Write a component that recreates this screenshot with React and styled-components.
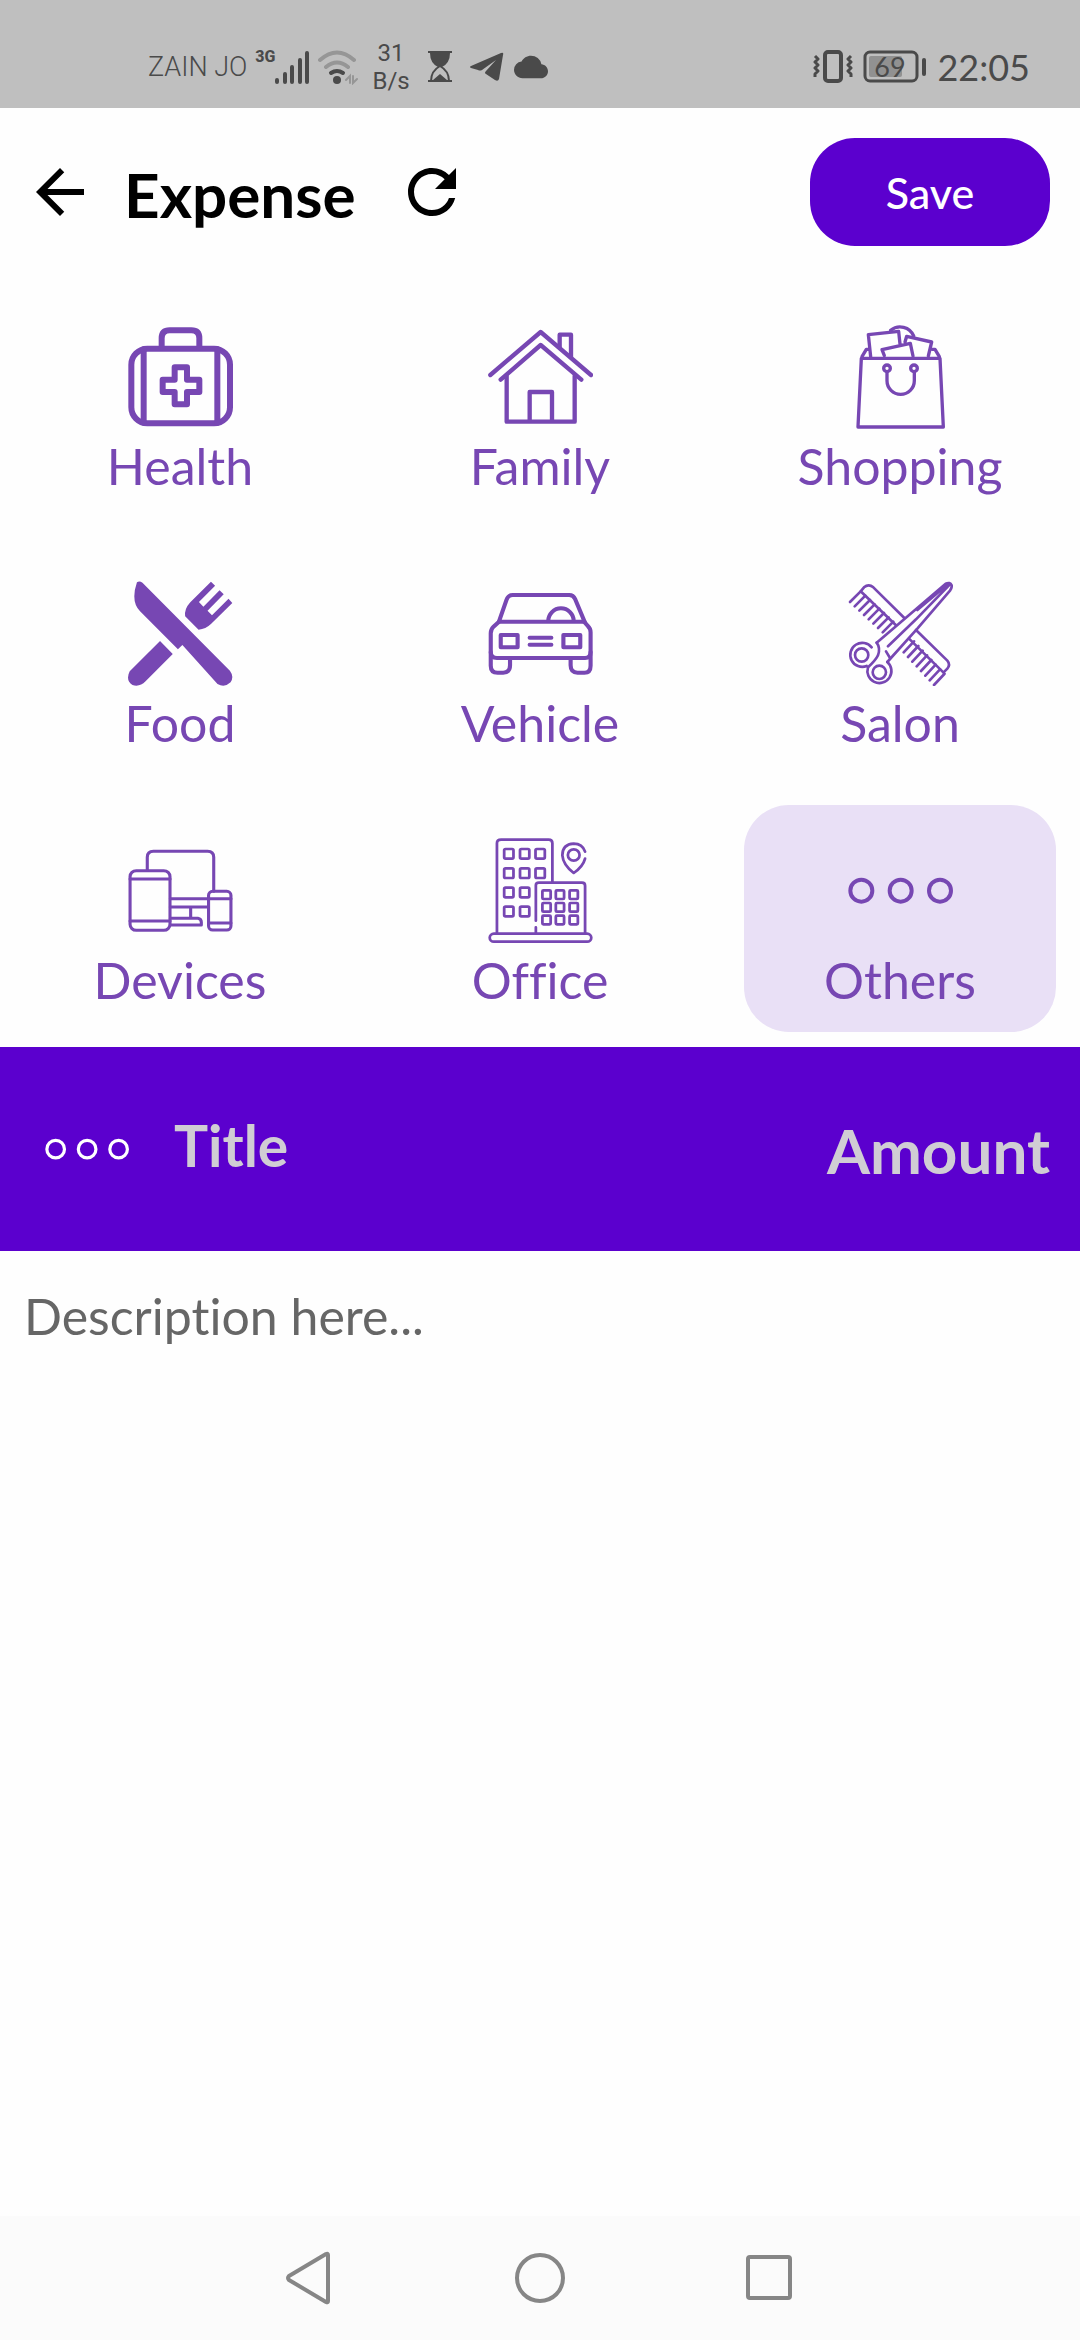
import { useState } from "react";
import styled, { createGlobalStyle } from "styled-components";
import { MdArrowBack, MdRefresh, MdCloud } from "react-icons/md";

const GlobalStyle = createGlobalStyle`
  * {
    box-sizing: border-box;
  }

  body {
    margin: 0;
    background-color: #fefefe;
    font-family: "Lato", "Noto Sans", sans-serif;
    font-variant-ligatures: none;
  }

  button, input, textarea {
    font-family: inherit;
    font-variant-ligatures: inherit;
    margin: 0;
    padding: 0;
    border: none;
    background: none;
    outline: none;
  }

  button {
    cursor: pointer;
  }
`;

const Page = styled.div`
  min-height: 100vh;
  display: flex;
  flex-direction: column;
`;

const StatusBar = styled.div`
  height: 108px;
  padding: 26px 50px 0 148px;
  background-color: #bfbfbf;
  color: #4a4a4a;
  display: flex;
  align-items: center;
  justify-content: space-between;
`;

const StatusGroup = styled.div`
  display: flex;
  align-items: center;
  gap: ${({ $gap }) => $gap}px;

  svg {
    display: block;
    flex: none;
  }
`;

const Carrier = styled.span`
  font-family: "Roboto", sans-serif;
  font-size: 27px;
  font-weight: 300;
`;

const Speed = styled.span`
  font-family: "Roboto", sans-serif;
  font-size: 24px;
  line-height: 28px;
  text-align: center;
  margin: 0 10px 0 6px;
`;

const Clock = styled.span`
  font-size: 36px;
`;

const Header = styled.header`
  height: 168px;
  padding: 0 30px 0 24px;
  display: flex;
  align-items: center;
`;

const IconButton = styled.button`
  display: flex;
  font-size: 72px;
  color: #000;
`;

const Heading = styled.h1`
  margin: 4px 40px 0 28px;
  font-size: 62px;
  font-weight: 700;
  line-height: 72px;
  color: #000;
`;

const SaveButton = styled.button`
  width: 240px;
  height: 108px;
  margin-left: auto;
  border-radius: 45px;
  background-color: #5b00ce;
  color: #fff;
  font-size: 43px;
  font-weight: 500;
`;

const CategoryGrid = styled.div`
  display: grid;
  grid-template-columns: repeat(3, 1fr);
  gap: 30px 48px;
  padding: 15px 24px;
`;

const CategoryTile = styled.button`
  height: 227px;
  padding-top: 33px;
  border-radius: 45px;
  display: flex;
  flex-direction: column;
  align-items: center;
  justify-content: flex-start;
  color: #7747b3;
  background-color: ${({ $active }) => ($active ? "#e9e0f6" : "transparent")};

  svg {
    display: block;
    width: 105px;
    height: 105px;
    flex: none;
  }
`;

const CategoryName = styled.span`
  margin-top: 7px;
  font-size: 50px;
  line-height: 60px;
`;

const EntryBar = styled.div`
  height: 204px;
  padding: 0 30px 0 45px;
  display: flex;
  align-items: center;
  gap: 45px;
  background-color: #5b00ce;
  color: #fff;

  svg {
    width: 84px;
    height: 84px;
    flex: none;
  }
`;

const EntryInput = styled.input`
  min-width: 0;
  flex: 1;
  height: 80px;
  padding-top: 2px;
  font-size: 62px;
  font-weight: 700;
  text-align: right;
  color: #fff;

  &::placeholder {
    color: #d0cdd4;
    opacity: 1;
  }
`;

const TitleInput = styled(EntryInput)`
  padding: 0 0 8px;
  font-size: 57px;
  text-align: left;
`;

const Description = styled.textarea`
  flex: 1;
  padding: 35px 24px;
  font-size: 50px;
  line-height: 60px;
  color: #222;
  resize: none;

  &::placeholder {
    color: #666;
    opacity: 1;
  }
`;

const NavBar = styled.nav`
  height: 124px;
  background-color: #fbfbfb;
  display: flex;
  align-items: center;
  justify-content: center;
  gap: 170px;

  button {
    display: flex;
  }
`;

const Drawing = ({ box, width, children, fill = "none" }) => (
  <svg
    viewBox={box}
    preserveAspectRatio="none"
    fill={fill}
    stroke={width ? "currentColor" : "none"}
    strokeWidth={width}
    strokeLinecap="round"
    strokeLinejoin="round"
    aria-hidden="true"
  >
    {children}
  </svg>
);

const HealthIcon = () => (
  <Drawing box="112 70 315 315" width={18}>
    <rect x="122" y="144" width="296" height="224" rx="48" />
    <path d="M159 146V366M380 146V366M213 140V113Q213 89 237 89H302Q326 89 326 113V140" />
    <path d="M252 200H289V237H326V274H289V311H252V274H216V237H252Z" />
  </Drawing>
);

const FamilyIcon = () => (
  <Drawing box="112 70 315 315" width={13}>
    <path d="M119 223L270 94L421 223M150 237L270 133L392 237" />
    <path d="M168 226V363H372V226M237 357V274H304V357M327 140V102H361V168" />
  </Drawing>
);

const ShoppingIcon = () => (
  <Drawing box="202 70 315 315" width={10}>
    <path d="M242 173H478L488 379H232Z" />
    <path d="M244 168L257 146H266M476 168L463 146H454" />
    <path d="M270 168L263 102L354 92L358 130M311 165L304 147L389 128L397 166M373 124L378 107L453 124L443 166" />
    <path d="M330 89A44 44 0 0 1 399 106M319 215V240A41 41 0 0 0 401 240V215" />
    <circle cx="319" cy="203" r="10" />
    <circle cx="400" cy="203" r="10" />
  </Drawing>
);

const FoodIcon = () => (
  <Drawing box="109 61 305 315" fill="currentColor">
    <path d="M135 65Q142 60 151 66L405 330Q418 348 407 365Q390 382 369 370L267 253L254 266L144 152Q116 122 135 65Z" />
    <path d="M350 63L362 75L315 124L328 138L375 89L387 101L340 150L353 164L401 114L412 127L350 190Q335 205 314 207L275 167Q272 145 290 125Z" />
    <path d="M202 241L239 280L160 362Q143 380 122 373Q101 358 114 332Z" />
  </Drawing>
);

const VehicleIcon = () => (
  <Drawing box="1154 61 305 315" width={12}>
    <path d="M1186 182L1208 117Q1213 103 1226 103H1390Q1402 103 1407 115L1435 184M1186 183H1435" />
    <path d="M1186 183L1170 198Q1162 206 1162 218V274Q1162 292 1180 292H1436Q1452 292 1452 274V215Q1452 204 1444 196L1433 183" />
    <path d="M1162 274V315Q1162 336 1182 336H1198Q1218 336 1218 314V294M1452 274V315Q1452 336 1434 336H1414Q1394 336 1394 314V294" />
    <path d="M1275 231H1338M1275 252H1338M1329 181A37 38 0 0 1 1403 181" />
    <rect x="1191" y="223" width="49" height="37" />
    <rect x="1373" y="223" width="49" height="37" />
  </Drawing>
);

const upperTeeth = [0, 1, 2, 3, 4, 5, 6, 7].map((i) => `M${240 + i * 14} ${92 + i * 13}l-32 32`);
const lowerTeeth = [0, 1, 2, 3, 4, 5, 6, 7].map((i) => `M${491 - i * 13} ${340 - i * 14}l-31 33`);

const SalonIcon = () => (
  <Drawing box="202 61 315 315" width={8}>
    <path d={upperTeeth.join("")} />
    <path d={lowerTeeth.join("")} />
    <path d="M240 92L250 80Q264 68 278 80L371 172M240 92L346 194" />
    <path d="M406 208L500 300Q510 312 500 324L488 336M385 234L491 338" />
    <path d="M288 246L495 69Q508 63 513 74Q514 82 508 90L410 204L320 304M322 257L406 176L505 74M410 148L500 72" />
    <path d="M288 246Q300 262 292 284Q286 298 262 320M273 260A36 36 0 1 0 258 316" />
    <path d="M316 272L328 292M262 320A36 36 0 1 0 320 304" />
    <circle cx="243" cy="283" r="20" />
    <circle cx="296" cy="335" r="20" />
  </Drawing>
);

const DevicesIcon = () => (
  <Drawing box="109 52 305 315" width={9}>
    <rect x="115" y="150" width="116" height="179" rx="18" />
    <path d="M115 175H231M115 301H231" />
    <path d="M165 148V110Q165 92 183 92H340Q358 92 358 110V212" />
    <path d="M232 234H342M232 259H342M291 262V290M232 293H312Q322 295 322 305V313H232" />
    <rect x="343" y="212" width="65" height="116" rx="12" />
    <path d="M343 234H408M343 307H408" />
  </Drawing>
);

const towerWindows = [99, 157, 215, 272].flatMap((y, row) =>
  [1214, 1260, 1305].slice(0, row < 2 ? 3 : 2).map((x) => [x, y])
);
const annexWindows = [222, 260, 298].flatMap((y) => [1324, 1363, 1403].map((x) => [x, y]));

const OfficeIcon = () => (
  <Drawing box="1154 52 305 315" width={8}>
    <path d="M1180 336V68Q1180 57 1192 57H1330Q1341 57 1341 68V184" />
    <path d="M1293 300V194Q1293 186 1302 186H1427Q1436 186 1436 195V336M1293 320V336" />
    <rect x="1159" y="339" width="295" height="24" rx="12" />
    {towerWindows.map(([x, y]) => (
      <rect key={`${x}-${y}`} x={x - 13} y={y - 14} width="27" height="29" rx="4" />
    ))}
    {annexWindows.map(([x, y]) => (
      <rect key={`${x}-${y}`} x={x - 12} y={y - 13} width="24" height="26" rx="3" />
    ))}
    <circle cx="1403" cy="103" r="17" />
    <path d="M1436 93Q1428 69 1403 69Q1370 71 1370 104Q1372 132 1403 157Q1430 138 1436 114" />
  </Drawing>
);

const DotsIcon = () => (
  <Drawing box="352 142 315 315" width={12}>
    <circle cx="392" cy="300" r="33" />
    <circle cx="510" cy="300" r="33" />
    <circle cx="628" cy="300" r="33" />
  </Drawing>
);

const NetworkType = styled.span`
  align-self: flex-start;
  margin-right: -8px;
  font-family: "Roboto", sans-serif;
  font-size: 16px;
  font-weight: 800;
  line-height: 16px;
`;

const SignalIcon = () => (
  <svg width="36" height="36" viewBox="0 0 36 36" aria-hidden="true">
    <path
      d="M3 31V33M11 25V33M18 18V33M26 11V33M33 4V33"
      stroke="currentColor"
      strokeWidth="4"
      strokeLinecap="round"
    />
  </svg>
);

const WifiIcon = () => (
  <svg width="40" height="36" viewBox="0 0 40 36" fill="none" strokeWidth="4" strokeLinecap="round" aria-hidden="true">
    <path d="M2 11Q19 -4 36 11M8 18Q19 9 30 18" stroke="#969696" />
    <path d="M13 24Q19 20 25 24" stroke="currentColor" />
    <circle cx="19" cy="31" r="4" fill="currentColor" />
    <path d="M28 31L32 27V34M35 27V34L39 30" stroke="#969696" strokeWidth="2" />
  </svg>
);

const HourglassIcon = () => (
  <svg width="24" height="32" viewBox="0 0 24 32" aria-hidden="true">
    <path d="M0 0H24V2H22Q22 12 14 16H10Q2 12 2 2H0Z" fill="currentColor" />
    <path d="M3 30Q3 20 12 15Q21 20 21 30" fill="none" stroke="currentColor" strokeWidth="2" />
    <path d="M0 29H5L12 23L19 29H24V31H0Z" fill="currentColor" />
  </svg>
);

const TelegramIcon = () => (
  <svg width="34" height="30" viewBox="0 0 34 30" aria-hidden="true">
    <path
      d="M1 14L31 1Q34 0 33 3L29 27Q28 30 25 28L16 22Q14 21 16 19L26 8L12 18Q10 19 8 18L1 16Q-1 15 1 14Z"
      fill="currentColor"
    />
  </svg>
);

const VibrateIcon = () => (
  <svg width="40" height="34" viewBox="0 0 40 34" fill="none" stroke="currentColor" aria-hidden="true">
    <rect x="12" y="2" width="16" height="29" rx="3" strokeWidth="4" />
    <path
      d="M2 6L5 9L2 12L5 15L2 18L5 21L2 24L2 27M38 6L35 9L38 12L35 15L38 18L35 21L38 24L38 27"
      strokeWidth="3"
      strokeLinejoin="round"
    />
  </svg>
);

const BatteryIcon = () => (
  <svg width="64" height="34" viewBox="0 0 64 34" aria-hidden="true">
    <rect x="6" y="6" width="33" height="21" rx="2" fill="#919191" />
    <rect x="2" y="2" width="52" height="29" rx="5" fill="none" stroke="currentColor" strokeWidth="3" />
    <rect x="59" y="8" width="4" height="18" rx="2" fill="currentColor" />
    <text x="27" y="27" textAnchor="middle" fontFamily="Lato" fontSize="27" fill="currentColor">
      69
    </text>
  </svg>
);

const categories = [
  { name: "Health", Icon: HealthIcon },
  { name: "Family", Icon: FamilyIcon },
  { name: "Shopping", Icon: ShoppingIcon },
  { name: "Food", Icon: FoodIcon },
  { name: "Vehicle", Icon: VehicleIcon },
  { name: "Salon", Icon: SalonIcon },
  { name: "Devices", Icon: DevicesIcon },
  { name: "Office", Icon: OfficeIcon },
  { name: "Others", Icon: DotsIcon },
];

const App = () => {
  const [selected, setSelected] = useState("Others");
  const SelectedIcon = categories.find(({ name }) => name === selected).Icon;

  return (
    <>
      <GlobalStyle />
      <Page>
        <StatusBar>
          <StatusGroup $gap={8}>
            <Carrier>ZAIN JO</Carrier>
            <StatusGroup $gap={7}>
              <NetworkType>3G</NetworkType>
              <SignalIcon />
            </StatusGroup>
            <WifiIcon />
            <Speed>
              31
              <br />
              B/s
            </Speed>
            <HourglassIcon />
            <StatusGroup $gap={10}>
              <span />
              <TelegramIcon />
              <MdCloud size={34} />
            </StatusGroup>
          </StatusGroup>
          <StatusGroup $gap={10}>
            <VibrateIcon />
            <BatteryIcon />
            <Clock>22:05</Clock>
          </StatusGroup>
        </StatusBar>

        <Header>
          <IconButton aria-label="Back">
            <MdArrowBack />
          </IconButton>
          <Heading>Expense</Heading>
          <IconButton aria-label="Reset">
            <MdRefresh />
          </IconButton>
          <SaveButton>Save</SaveButton>
        </Header>

        <CategoryGrid>
          {categories.map(({ name, Icon }) => (
            <CategoryTile
              key={name}
              $active={name === selected}
              aria-pressed={name === selected}
              onClick={() => setSelected(name)}
            >
              <Icon />
              <CategoryName>{name}</CategoryName>
            </CategoryTile>
          ))}
        </CategoryGrid>

        <EntryBar>
          <SelectedIcon />
          <TitleInput placeholder="Title" aria-label="Title" />
          <EntryInput placeholder="Amount" aria-label="Amount" />
        </EntryBar>

        <Description placeholder="Description here..." aria-label="Description" />

        <NavBar>
          <button aria-label="Back">
            <svg width="60" height="54" viewBox="0 0 60 54" fill="none" stroke="#868686" strokeWidth="4" strokeLinejoin="round">
              <path d="M9 25Q7 27 9 29L46 51Q48 52 48 50V4Q48 2 46 3Z" />
            </svg>
          </button>
          <button aria-label="Home">
            <svg width="60" height="54" viewBox="0 0 60 54" fill="none" stroke="#868686" strokeWidth="4">
              <circle cx="30" cy="27" r="23" />
            </svg>
          </button>
          <button aria-label="Recent apps">
            <svg width="60" height="54" viewBox="0 0 60 54" fill="none" stroke="#868686" strokeWidth="4">
              <rect x="8" y="6" width="42" height="41" rx="2" />
            </svg>
          </button>
        </NavBar>
      </Page>
    </>
  );
};

export default App;
